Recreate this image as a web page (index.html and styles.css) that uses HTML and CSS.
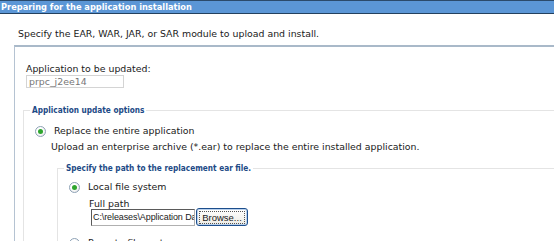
FILE: index.html
```html
<!DOCTYPE html>
<html>
<head>
<meta charset="utf-8">
<link rel="stylesheet" href="styles.css">
</head>
<body>
<div class="title">Preparing for the application installation</div>
<p class="intro">Specify the EAR, WAR, JAR, or SAR module to upload and install.</p>
<div class="panel">
  <div class="field">
    <div class="label">Application to be updated:</div>
    <div class="readonly">prpc_j2ee14</div>
  </div>
  <fieldset class="opts">
    <legend>Application update options</legend>
    <div class="choice"><span class="radio on"></span><span>Replace the entire application</span></div>
    <div class="desc">Upload an enterprise archive (*.ear) to replace the entire installed application.</div>
    <fieldset class="inner">
      <legend>Specify the path to the replacement ear file.</legend>
      <div class="choice"><span class="radio on"></span><span>Local file system</span></div>
      <div class="path">
        <div class="label">Full path</div>
        <div class="filerow">
          <div class="text">C:\releases\Application Data\prpc</div>
          <div class="browse"><span>Browse...</span></div>
        </div>
      </div>
      <div class="choice remote"><span class="radio"></span><span>Remote file system</span></div>
    </fieldset>
  </fieldset>
</div>
</body>
</html>
```
FILE: styles.css
```css
html, body {
  margin: 0;
  padding: 0;
  background: #ffffff;
  overflow: hidden;
}
body {
  width: 554px;
  height: 241px;
  font-family: "DejaVu Sans", Verdana, sans-serif;
  font-size: 9.4px;
  color: #1a1a1a;
}
.title {
  height: 12px;
  background: #5b96d6;
  border-top: 1px solid #2b4a6b;
  border-bottom: 1px solid #23405e;
  color: #ffffff;
  font-family: "DejaVu Sans Condensed", "DejaVu Sans", sans-serif;
  font-weight: bold;
  font-size: 9.2px;
  line-height: 12px;
  padding-left: 1px;
}
.intro {
  margin: 0;
  padding: 14px 0 0 18px;
  height: 17px;
  line-height: 12px;
}
.panel {
  border-left: 1px solid #b5c3d2;
  border-top: 2px solid #a9b9c9;
  margin-left: 14px;
  padding: 16px 0 0 0;
  height: 300px;
}
.field {
  padding-left: 11px;
}
.label {
  line-height: 12px;
}
.readonly {
  width: 94px;
  height: 11px;
  border: 1px solid #d4d4d4;
  color: #777;
  padding-left: 2px;
  line-height: 11px;
}
fieldset {
  margin: 0;
  padding: 0;
  border: 1px solid #e4e4e4;
  border-right: none;
  border-bottom: none;
}
legend {
  color: #1d4a86;
  font-family: "DejaVu Sans Condensed", "DejaVu Sans", sans-serif;
  font-weight: bold;
  font-size: 8.2px;
  line-height: 10px;
  padding: 0 2px;
  margin-left: -5px;
}
.opts {
  margin: 17px 0 0 8px;
  padding: 10px 0 0 11px;
}
.choice {
  display: flex;
  align-items: center;
  gap: 8px;
  line-height: 12px;
}
.radio {
  width: 9px;
  height: 9px;
  border: 1px solid #8ea2b6;
  border-radius: 50%;
  background: radial-gradient(circle at 40% 40%, #ffffff 40%, #dcdcdc 100%);
  display: flex;
  align-items: center;
  justify-content: center;
}
.radio.on::after {
  content: "";
  width: 5px;
  height: 5px;
  border-radius: 50%;
  background: #2ea52e;
}
.desc {
  padding: 4px 0 0 16px;
  line-height: 12px;
}
.inner {
  margin: 10px 0 0 22px;
  padding: 8px 0 0 11px;
}
.path {
  padding: 5px 0 0 20px;
}
.path .label {
  line-height: 11px;
}
.filerow {
  display: flex;
  align-items: center;
  gap: 1px;
  margin: -1px 0 0 2px;
}
.text {
  width: 101px;
  height: 15px;
  border: 1px solid;
  border-color: #5a5a5a #b0b0b0 #b0b0b0 #5a5a5a;
  font-family: "Liberation Sans", Arial, sans-serif;
  font-size: 9px;
  letter-spacing: -0.1px;
  line-height: 15px;
  padding-left: 1px;
  white-space: nowrap;
  overflow: hidden;
}
.browse {
  width: 50px;
  height: 16px;
  border: 1px solid #1c4e8c;
  border-radius: 3px;
  background: linear-gradient(#ffffff, #ecebe4);
  box-shadow: inset 0 0 0 1px #b9d1ee;
  display: flex;
  align-items: center;
  justify-content: center;
  font-family: "Liberation Sans", Arial, sans-serif;
  font-size: 9.5px;
}
.browse span {
  border: 1px dotted #555;
  padding: 0 2px;
  line-height: 11px;
}
.remote {
  margin-top: 11px;
}
```
